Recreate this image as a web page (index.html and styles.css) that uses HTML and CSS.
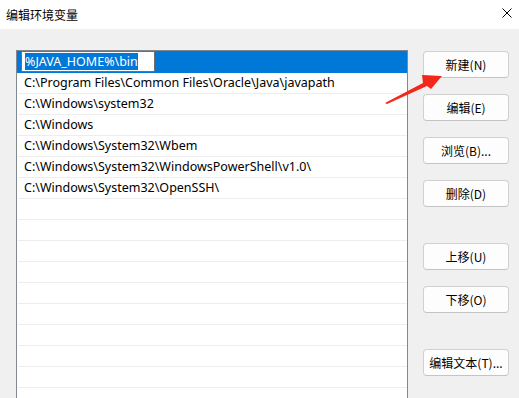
FILE: index.html
```html
<!DOCTYPE html>
<html lang="zh-CN">
<head>
    <meta charset="UTF-8">
    <title>编辑环境变量</title>
    <link rel="stylesheet" href="styles.css">
</head>
<body>
    <div class="title-bar">
        <span class="title">编辑环境变量</span>
        <!-- close button -->
        <svg class="close" width="10" height="10" viewBox="0 0 10 10">
            <path d="M0.5 0.5 L9.5 9.5 M9.5 0.5 L0.5 9.5" stroke="#000" stroke-width="1" fill="none"/>
        </svg>
    </div>

    <div class="dialog">
        <div class="path-list">
            <div class="row selected">
                <div class="edit-box"><span class="sel-text">%JAVA_HOME%\bin</span></div>
            </div>
            <div class="row">C:\Program Files\Common Files\Oracle\Java\javapath</div>
            <div class="row">C:\Windows\system32</div>
            <div class="row">C:\Windows</div>
            <div class="row">C:\Windows\System32\Wbem</div>
            <div class="row">C:\Windows\System32\WindowsPowerShell\v1.0\</div>
            <div class="row">C:\Windows\System32\OpenSSH\</div>
            <div class="row"></div>
            <div class="row"></div>
            <div class="row"></div>
            <div class="row"></div>
            <div class="row"></div>
            <div class="row"></div>
            <div class="row"></div>
            <div class="row"></div>
            <div class="row"></div>
            <div class="row"></div>
        </div>

        <div class="buttons">
            <div class="btn-group">
                <button>新建(N)</button>
                <button>编辑(E)</button>
                <button>浏览(B)...</button>
                <button>删除(D)</button>
            </div>
            <div class="btn-group">
                <button>上移(U)</button>
                <button>下移(O)</button>
            </div>
            <div class="btn-group">
                <button>编辑文本(T)...</button>
            </div>
        </div>
    </div>

    <!-- red annotation arrow drawn on top of the dialog -->
    <svg class="arrow" width="519" height="398" viewBox="0 0 519 398">
        <polygon points="385,103 423,83 422,75 442,76 431,89 427,86 387,104" fill="#f3271c"/>
    </svg>
</body>
</html>
```

FILE: styles.css
```css
/* Windows 11 style "edit environment variable" dialog */
body {
    font-family: "Noto Sans", "Noto Sans CJK SC", sans-serif;
    font-size: 12px;
    background-color: #f0f0f0;
    margin: 0;
    padding: 0;
    height: 398px;
    overflow: hidden;
    position: relative;
}
.title-bar {
    height: 29px;
    background: white;
    display: flex;
    align-items: center;
    justify-content: space-between;
    padding: 0 6px 0 6px;
}
.title {
    font-family: "Noto Sans CJK SC", sans-serif;
    color: #000;
    margin-top: -1px;
}
.close {
    margin-right: 1px;
    margin-top: -4px;
}
.dialog {
    display: flex;
    padding: 21px 0 0 16px;
}
.path-list {
    width: 390px;
    height: 360px;
    background: white;
    border: 1px solid #828790;
    overflow: hidden;
    flex-shrink: 0;
}
.row {
    height: 20px;
    line-height: 20px;
    font-size: 12.5px;
    padding-left: 6px;
    border-bottom: 1px solid #ededed;
    margin-left: 1px;
    color: #000;
    white-space: nowrap;
}
.row.selected {
    height: 21px;
    background: #0078d7;
    border-bottom-color: #0078d7;
    margin-left: 0;
    padding-left: 4px;
    display: flex;
    align-items: center;
}
.edit-box {
    width: 129px;
    height: 19px;
    background: white;
    border: 1px solid #6f6f6f;
    padding-left: 3px;
    display: flex;
    align-items: center;
}
.sel-text {
    background: #0078d7;
    color: white;
    line-height: 17px;
}
.buttons {
    display: flex;
    flex-direction: column;
    gap: 36px;
    margin: 1px 0 0 15px;
}
.btn-group {
    display: flex;
    flex-direction: column;
    gap: 16px;
}
.btn-group button {
    width: 86px;
    height: 27px;
    font-family: "Noto Sans CJK SC", sans-serif;
    font-size: 12px;
    color: #000;
    background: #fdfdfd;
    border: 1px solid #d0d0d0;
    border-bottom-color: #c4c4c4;
    border-radius: 4px;
    padding: 0;
}
.arrow {
    position: absolute;
    left: 0;
    top: 0;
    pointer-events: none;
}
```
